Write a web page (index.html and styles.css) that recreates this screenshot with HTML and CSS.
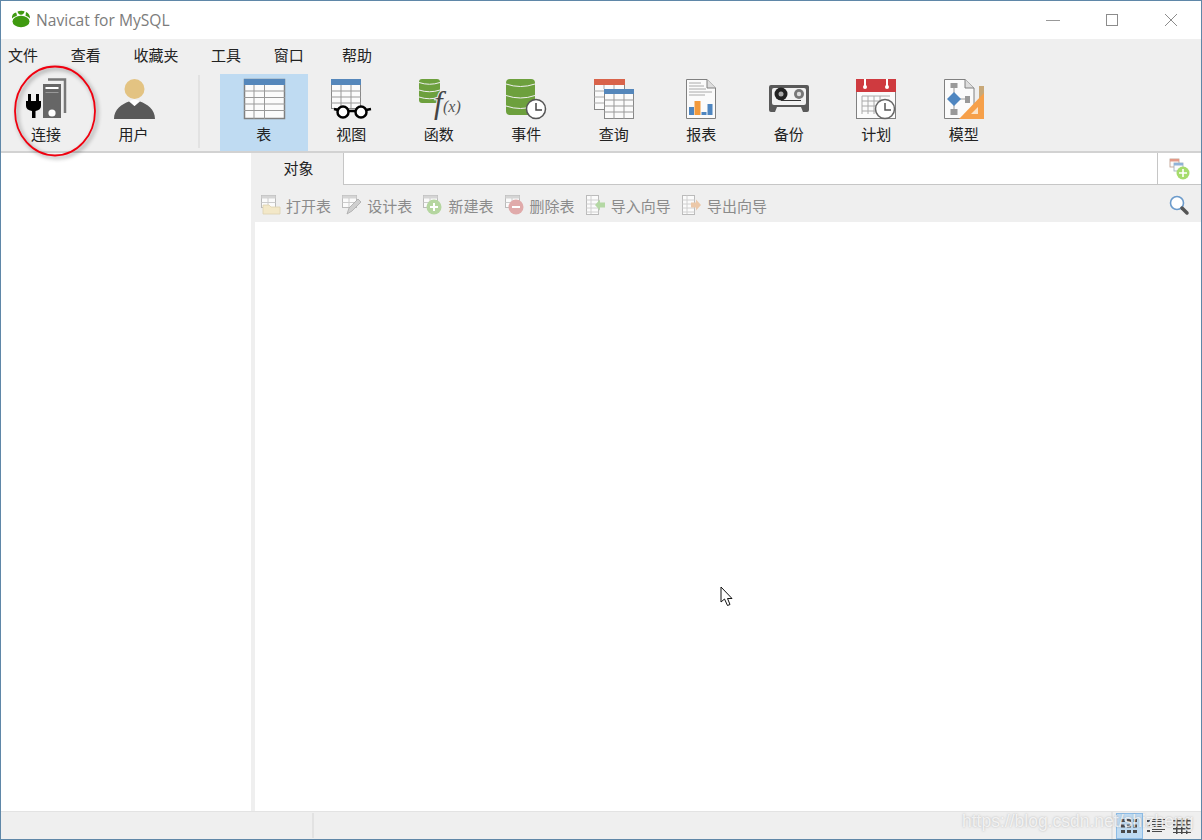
FILE: index.html
```html
<!DOCTYPE html>
<html lang="zh-CN">
<head>
    <meta charset="UTF-8">
    <title>Navicat for MySQL</title>
    <link rel="stylesheet" href="styles.css">
</head>
<body>
    <div class="window">
        <div class="titlebar">
            <svg class="logo" width="20" height="18" viewBox="0 0 20 18">
                <ellipse cx="10" cy="11.500" rx="8.500" ry="5.800" fill="#3f9a10"/>
                <path d="M1 8.500Q.5 3.500 5 2.500Q6.500 5.500 5.500 6Q2.500 6.500 1 8.500Z" fill="#3f9a10"/>
                <path d="M6.500 1.500Q10 0 13.500 1.200Q13 4.500 10 4.800Q7 4.500 6.500 1.500Z" fill="#3f9a10"/>
                <path d="M15 2Q19 3.500 19 8.500Q17 6.500 14.500 5.800Z" fill="#3f9a10"/>
            </svg>
            <span class="app-title">Navicat for MySQL</span>
            <div class="win-controls">
                <svg width="60" height="30" viewBox="0 0 60 30"><path d="M23 15.500H37" stroke="#999"/></svg>
                <svg width="58" height="30" viewBox="0 0 58 30"><rect x="23.500" y="9.500" width="11" height="11" fill="none" stroke="#8c8c8c"/></svg>
                <svg width="60" height="30" viewBox="0 0 60 30"><path d="M24 9L36 21M36 9L24 21" stroke="#8c8c8c"/></svg>
            </div>
        </div>

        <div class="menubar">
            <span class="menu-item">文件</span>
            <span class="menu-item">查看</span>
            <span class="menu-item">收藏夹</span>
            <span class="menu-item">工具</span>
            <span class="menu-item">窗口</span>
            <span class="menu-item menu-help">帮助</span>
        </div>

        <div class="toolbar">
            <div class="tool-btn">
                <svg width="48" height="44" viewBox="0 0 48 44">
                    <path d="M26 3.500H43V37" fill="none" stroke="#777" stroke-width="2.500"/>
                    <rect x="21" y="8" width="18" height="34" fill="#666"/>
                    <rect x="23.500" y="11" width="13" height="2" fill="#fff"/>
                    <rect x="23.500" y="16" width="13" height="1" fill="#999"/>
                    <circle cx="30" cy="37" r="3.600" fill="#fff"/>
                    <path d="M6 18h3v8H6zM14 18h3v8h-3z" fill="#000"/>
                    <path d="M4 25H19V30Q19 34 13.500 35V42H10V35Q4 34 4 30Z" fill="#000"/>
                </svg>
                <span>连接</span>
            </div>
            <div class="tool-btn">
                <svg width="48" height="44" viewBox="0 0 48 44">
                    <circle cx="24.500" cy="13" r="10" fill="#e3c382"/>
                    <path d="M4 43C4 33 12 28 19 25.500L24.500 30L30 25.500C37 28 45 33 45 43Z" fill="#595959"/>
                    <path d="M19.500 25L24.500 30L29.500 25Q24.500 22 19.500 25Z" fill="#fff"/>
                </svg>
                <span>用户</span>
            </div>
            <div class="tool-sep"></div>
            <div class="tool-btn active">
                <svg width="48" height="44" viewBox="0 0 48 44">
                    <use href="#grid-lg"/>
                </svg>
                <span>表</span>
            </div>
            <div class="tool-btn">
                <svg width="48" height="44" viewBox="0 0 48 44">
                    <rect x="4.500" y="3.500" width="29" height="29" fill="#fbfbfb" stroke="#888"/>
                    <rect x="4" y="3" width="30" height="6" fill="#5587bb"/>
                    <path d="M4 15H34M4 21H34M4 27H34M14 9V32M24 9V32" stroke="#999"/>
                    <circle cx="16" cy="36" r="5.500" fill="#fff" stroke="#000" stroke-width="2.500"/>
                    <circle cx="34" cy="36" r="5.500" fill="#fff" stroke="#000" stroke-width="2.500"/>
                    <path d="M21 35H29M7 33L11 34M39 34L44 33" stroke="#000" stroke-width="2.500"/>
                </svg>
                <span>视图</span>
            </div>
            <div class="tool-btn">
                <svg width="48" height="44" viewBox="0 0 48 44">
                    <rect x="4" y="3" width="21" height="24" rx="3" fill="#6da03d"/>
                    <path d="M4 6.500Q14.500 10 25 6.500M4 14Q14.500 17.500 25 14M4 21Q14.500 24.500 25 21" stroke="#efefef" fill="none"/>
                    <text class="fx-f" x="19" y="37">f</text>
                    <text class="fx-x" x="28" y="36">(x)</text>
                </svg>
                <span>函数</span>
            </div>
            <div class="tool-btn">
                <svg width="48" height="44" viewBox="0 0 48 44">
                    <rect x="4" y="3" width="29" height="36" rx="4" fill="#6da03d"/>
                    <path d="M4 8Q18.500 13 33 8M4 19.500Q18.500 24.500 33 19.500M4 30Q18.500 35 33 30" stroke="#efefef" fill="none"/>
                    <circle cx="34" cy="33" r="9.500" fill="#fff" stroke="#555" stroke-width="1.500"/>
                    <path d="M34 27V34H40" fill="none" stroke="#444" stroke-width="1.500"/>
                </svg>
                <span>事件</span>
            </div>
            <div class="tool-btn">
                <svg width="48" height="44" viewBox="0 0 48 44">
                    <rect x="4.500" y="3.500" width="30" height="30" fill="#fbfbfb" stroke="#888"/>
                    <rect x="4" y="3" width="31" height="6" fill="#d9634a"/>
                    <path d="M4 15H14M4 21H14M4 27H14M14 9V13M24 9V13" stroke="#aaa"/>
                    <rect x="14.500" y="13.500" width="29" height="29" fill="#fbfbfb" stroke="#888"/>
                    <rect x="14" y="13" width="30" height="5" fill="#5587bb"/>
                    <path d="M14 24H44M14 30H44M14 36H44M24 18V43M34 18V43" stroke="#999"/>
                </svg>
                <span>查询</span>
            </div>
            <div class="tool-btn">
                <svg width="48" height="44" viewBox="0 0 48 44">
                    <path d="M9.500 3.500H30L38.500 12V42.500H9.500Z" fill="#fbfbfb" stroke="#808080"/>
                    <path d="M30 3.500V12H38.500" fill="#ddd" stroke="#808080"/>
                    <path d="M12 7H24M12 10H27M12 13H29M12 16H35M12 19H28" stroke="#aaa"/>
                    <rect x="12" y="31" width="5" height="8" fill="#4f86c0"/>
                    <rect x="17.500" y="25" width="6" height="14" fill="#f39a3c"/>
                    <rect x="24.500" y="36" width="5" height="3" fill="#4f86c0"/>
                    <rect x="30.500" y="28" width="5" height="11" fill="#4f86c0"/>
                </svg>
                <span>报表</span>
            </div>
            <div class="tool-btn">
                <svg width="48" height="44" viewBox="0 0 48 44">
                    <path d="M6 9H42Q44 9 44 11V34Q44 36 42 36H38L36 31H12L10 36H6Q4 36 4 34V11Q4 9 6 9Z" fill="#595959"/>
                    <rect x="7" y="12" width="34" height="17" rx="2" fill="#f2f2f2"/>
                    <circle cx="16" cy="18" r="6.500" fill="#222"/>
                    <circle cx="16" cy="18" r="2.500" fill="#aaa"/>
                    <circle cx="34" cy="18" r="5" fill="#777"/>
                    <circle cx="34" cy="18" r="2.200" fill="#ddd"/>
                    <path d="M16 24.500H36" stroke="#333"/>
                    <path d="M15 33.500h2M21 33.500h2M26 33.500h2M31 33.500h2" stroke="#eee"/>
                </svg>
                <span>备份</span>
            </div>
            <div class="tool-btn">
                <svg width="48" height="44" viewBox="0 0 48 44">
                    <rect x="4.500" y="3.500" width="39" height="39" fill="#fbfbfb" stroke="#808080"/>
                    <rect x="4" y="3" width="40" height="13" fill="#cf3a3f"/>
                    <rect x="12" y="3" width="2" height="7" fill="#fff"/>
                    <circle cx="13" cy="11" r="2" fill="#fff"/>
                    <rect x="34" y="3" width="2" height="7" fill="#fff"/>
                    <circle cx="35" cy="11" r="2" fill="#fff"/>
                    <path d="M10 20H38M10 25H38M10 30H38M10 35H38M10 20V38M16 20V38M22 20V38M28 20V38" stroke="#aaa"/>
                    <circle cx="33" cy="33" r="9.500" fill="#fff" stroke="#666" stroke-width="1.500"/>
                    <path d="M33 27V34H39" fill="none" stroke="#555" stroke-width="1.500"/>
                </svg>
                <span>计划</span>
            </div>
            <div class="tool-btn">
                <svg width="48" height="44" viewBox="0 0 48 44">
                    <path d="M4.500 3.500H25L34 12V42.500H4.500Z" fill="#fbfbfb" stroke="#808080"/>
                    <path d="M25 3.500V12H34" fill="#ddd" stroke="#808080"/>
                    <rect x="39" y="10" width="5" height="14" fill="#c8a878"/>
                    <path d="M14 10V36M14 23H27" stroke="#999"/>
                    <rect x="10.500" y="7" width="7" height="5" fill="#999"/>
                    <rect x="10.500" y="33" width="7" height="6" fill="#999"/>
                    <rect x="25" y="20" width="5" height="7" fill="#999"/>
                    <path d="M14 16L21 23L14 30L7 23Z" fill="#4f86c0"/>
                    <path d="M44 17V43H19Z" fill="#f6a04a"/>
                    <path d="M38 31V38H31Z" fill="#fbe3c8"/>
                </svg>
                <span>模型</span>
            </div>
        </div>

        <div class="workspace">
            <div class="sidebar"></div>
            <div class="main">
                <div class="tabbar">
                    <div class="tab">对象</div>
                    <div class="tab-fill"></div>
                    <div class="tab-add">
                        <svg width="22" height="22" viewBox="0 0 22 22">
                            <rect x="1" y="1" width="9" height="8" fill="#fbfbfb" stroke="#b98" stroke-width=".8"/>
                            <rect x="1" y="1" width="9" height="2.500" fill="#e39a88"/>
                            <rect x="5" y="5" width="9" height="8" fill="#fbfbfb" stroke="#9ab" stroke-width=".8"/>
                            <rect x="5" y="5" width="9" height="2.500" fill="#8fb2d8"/>
                            <circle cx="14" cy="15" r="6.500" fill="#a6dc6c"/>
                            <path d="M14 11V19M10 15H18" stroke="#fff" stroke-width="1.600"/>
                        </svg>
                    </div>
                </div>
                <div class="objbar">
                    <div class="obj-item">
                        <svg width="22" height="22" viewBox="0 0 22 22">
                            <use href="#grid-sm"/>
                            <path d="M3 20V11H9L11 13H20V20Z" fill="#f3e8c8" stroke="#ddd2b0" stroke-width=".8"/>
                        </svg>
                        <span>打开表</span>
                    </div>
                    <div class="obj-item">
                        <svg width="22" height="22" viewBox="0 0 22 22">
                            <use href="#grid-sm"/>
                            <path d="M6 20L8 14L17 5L20 8L11 17Z" fill="#cfcfcf" stroke="#aaa" stroke-width=".8"/>
                        </svg>
                        <span>设计表</span>
                    </div>
                    <div class="obj-item">
                        <svg width="22" height="22" viewBox="0 0 22 22">
                            <use href="#grid-sm"/>
                            <circle cx="12" cy="13" r="7.500" fill="#b5d6a0"/>
                            <path d="M12 9V17M8 13H16" stroke="#fff" stroke-width="2"/>
                        </svg>
                        <span>新建表</span>
                    </div>
                    <div class="obj-item">
                        <svg width="22" height="22" viewBox="0 0 22 22">
                            <use href="#grid-sm"/>
                            <circle cx="12" cy="13" r="7.500" fill="#e0aaaa"/>
                            <path d="M8 13H16" stroke="#fff" stroke-width="2"/>
                        </svg>
                        <span>删除表</span>
                    </div>
                    <div class="obj-item">
                        <svg width="22" height="22" viewBox="0 0 22 22">
                            <use href="#grid-tall"/>
                            <path d="M10 11L15 5.500V8.500H20V13.500H15V16.500Z" fill="#b4d8a4"/>
                        </svg>
                        <span>导入向导</span>
                    </div>
                    <div class="obj-item">
                        <svg width="22" height="22" viewBox="0 0 22 22">
                            <use href="#grid-tall"/>
                            <path d="M20 11L15 5.500V8.500H10V13.500H15V16.500Z" fill="#ecc8a8"/>
                        </svg>
                        <span>导出向导</span>
                    </div>
                    <svg class="search" width="22" height="22" viewBox="0 0 22 22">
                        <circle cx="9" cy="9" r="6.500" fill="#fff" stroke="#6c9bcb" stroke-width="1.600"/>
                        <path d="M14 14L19 19" stroke="#555" stroke-width="3.500" stroke-linecap="round"/>
                    </svg>
                </div>
                <div class="content"></div>
            </div>
        </div>

        <div class="statusbar">
            <div class="status-cell"></div>
            <div class="view-btns">
                <div class="view-btn active">
                    <svg width="18" height="16" viewBox="0 0 18 16"><use href="#view-icons"/></svg>
                </div>
                <div class="view-btn">
                    <svg width="18" height="16" viewBox="0 0 18 16"><use href="#view-list"/></svg>
                </div>
                <div class="view-btn">
                    <svg width="18" height="16" viewBox="0 0 18 16"><use href="#view-grid"/></svg>
                </div>
            </div>
        </div>

        <!-- annotation drawn over the screenshot -->
        <svg class="annotation" width="92" height="100" viewBox="0 0 92 100">
            <ellipse cx="44" cy="48" rx="40" ry="44.500" fill="none" stroke="#f0000f" stroke-width="1.800"/>
        </svg>
        <svg class="cursor" width="16" height="22" viewBox="0 0 16 22">
            <path d="M1 1V16L4.500 13L7.500 19.500L10 18.500L7.500 12.500H12Z" fill="#fff" stroke="#111"/>
        </svg>
        <span class="watermark">https://blog.csdn.net/shizheng</span>
    </div>

    <svg class="defs" width="0" height="0">
        <defs>
            <g id="grid-lg">
                <rect x="4.500" y="3.500" width="40" height="39" fill="#fbfbfb" stroke="#808080" stroke-width="1.500"/>
                <rect x="4" y="3" width="41" height="6" fill="#5587bb"/>
                <path d="M4 15H45M4 21.500H45M4 28H45M4 34.500H45M14 9V43M24.500 9V43" stroke="#999"/>
            </g>
            <g id="grid-sm">
                <rect x="1.500" y="1.500" width="14" height="12" fill="#fbfbfb" stroke="#bbb"/>
                <rect x="1.500" y="1.500" width="14" height="3" fill="#d5d5d5"/>
                <path d="M1.500 8.500H15.500M8 4V13" stroke="#ccc"/>
            </g>
            <g id="grid-tall">
                <rect x="1.500" y="1.500" width="12" height="19" fill="#fbfbfb" stroke="#bbb"/>
                <path d="M1.500 6H13.500M1.500 10H13.500M1.500 14H13.500M1.500 18H13.500M6 1.500V20" stroke="#d0d0d0"/>
            </g>
            <g id="view-icons" fill="#4a4a4a">
                <path d="M1 1h4v3H1zM7 1h4v3H7zM13 1h4v3h-4zM1 6.500h4v3H1zM7 6.500h4v3H7zM13 6.500h4v3h-4zM1 12h4v3H1zM7 12h4v3H7zM13 12h4v3h-4z"/>
            </g>
            <g id="view-list" fill="#4a4a4a">
                <path d="M0 2h3v2H0zM0 7h3v2H0zM0 12h3v2H0zM5 1h13v1H5zM5 3h10v1H5zM5 6h13v1H5zM5 8h10v1H5zM5 11h13v1H5zM5 13h10v1H5z"/>
            </g>
            <g id="view-grid" fill="#4a4a4a">
                <path d="M0 2h18v1.500H0zM0 6h18v1.500H0zM0 10h18v1.500H0zM0 14h18v1H0zM3 0h1.500v16H3zM8 0h1.500v16H8zM13 0h1.500v16H13z"/>
            </g>
        </defs>
    </svg>
</body>
</html>
```

FILE: styles.css
```css
html, body {
    margin: 0;
    padding: 0;
    height: 100%;
    overflow: hidden;
    background-color: #fff;
    font-family: "Noto Sans CJK SC", "Noto Sans", sans-serif;
    font-size: 15px;
    color: #222;
}

.window {
    position: relative;
    box-sizing: border-box;
    width: 1202px;
    height: 840px;
    border: 1px solid #5f87a8;
    display: flex;
    flex-direction: column;
    overflow: hidden;
}

.defs {
    position: absolute;
}

/* title bar */
.titlebar {
    height: 38px;
    flex: none;
    display: flex;
    align-items: center;
    background-color: #fff;
}

.logo {
    margin-left: 10px;
    margin-top: -2px;
}

.app-title {
    margin-left: 5px;
    margin-top: -1px;
    font-family: "Open Sans", sans-serif;
    font-size: 15.600px;
    color: #7c7c7c;
}

.win-controls {
    margin-left: auto;
    display: flex;
}

/* menu */
.menubar {
    height: 35px;
    flex: none;
    box-sizing: border-box;
    display: flex;
    align-items: center;
    gap: 32.700px;
    padding: 0 0 5px 7px;
    background-color: #efefef;
}

.menu-help {
    margin-left: 5.500px;
}

/* main toolbar */
.toolbar {
    height: 77px;
    flex: none;
    display: flex;
    padding-left: 1.250px;
    background-color: #efefef;
    border-bottom: 2px solid #d2d2d2;
}

.tool-btn {
    width: 87.500px;
    flex: none;
    display: flex;
    flex-direction: column;
    align-items: center;
    padding-top: 2px;
    box-sizing: border-box;
}

.tool-btn span {
    margin-top: 3px;
    line-height: 22px;
}

.tool-btn.active {
    background-color: #bfdbf2;
}

.tool-sep {
    width: 2px;
    margin: 1px 20px 3px 20.750px;
    background-color: #e2e2e2;
}

.fx-f {
    font-family: "Liberation Serif", serif;
    font-style: italic;
    font-size: 31px;
    fill: #444;
    stroke: #efefef;
    stroke-width: 2px;
    paint-order: stroke;
}

.fx-x {
    font-family: "Liberation Serif", serif;
    font-style: italic;
    font-size: 16px;
    fill: #555;
}

/* workspace */
.workspace {
    flex: 1;
    display: flex;
    min-height: 0;
}

.sidebar {
    width: 250px;
    flex: none;
    background-color: #fff;
    border-right: 4px solid #efefef;
}

.main {
    flex: 1;
    display: flex;
    flex-direction: column;
}

.tabbar {
    height: 32px;
    flex: none;
    display: flex;
}

.tab {
    width: 88px;
    display: flex;
    align-items: center;
    justify-content: center;
    background-color: #efefef;
    padding: 0 1px 3px 0;
    box-sizing: border-box;
}

.tab-fill {
    flex: 1;
    background-color: #fff;
    border-left: 1px solid #c6c6c6;
    border-bottom: 1px solid #c6c6c6;
}

.tab-add {
    width: 44px;
    display: flex;
    align-items: center;
    justify-content: center;
    border-left: 1px solid #c6c6c6;
    border-bottom: 1px solid #c6c6c6;
    box-sizing: border-box;
    padding-left: 1px;
}

.objbar {
    height: 37px;
    flex: none;
    box-sizing: border-box;
    display: flex;
    align-items: center;
    gap: 10.200px;
    padding: 2px 0 0 5px;
    background-color: #efefef;
}

.obj-item {
    display: flex;
    align-items: center;
    gap: 4px;
    color: #8b8b8b;
}

.obj-item span {
    margin-top: 2px;
}

.search {
    margin-left: auto;
    margin-right: 11px;
}

.content {
    flex: 1;
    background-color: #fff;
}

/* status bar */
.statusbar {
    height: 27px;
    flex: none;
    display: flex;
    background-color: #efefef;
    border-top: 1px solid #e3e3e3;
}

.status-cell {
    width: 311px;
    margin: 1px 0;
    border-right: 2px solid #e2e2e2;
}

.view-btns {
    margin-left: auto;
    margin-right: 5.500px;
    display: flex;
    align-items: center;
    padding-left: 3px;
    border-left: 2px solid #e2e2e2;
}

.view-btn {
    box-sizing: border-box;
    width: 26.500px;
    height: 26px;
    display: flex;
    align-items: center;
    justify-content: center;
}

.view-btn.active {
    background-color: #bfdbf2;
    border: 1px solid #8dbce6;
}

/* overlays */
.annotation {
    position: absolute;
    left: 10px;
    top: 62px;
    filter: drop-shadow(2px 2px 2px rgba(0, 0, 0, 0.45));
}

.cursor {
    position: absolute;
    left: 719px;
    top: 585px;
}

.watermark {
    position: absolute;
    left: 961px;
    top: 810px;
    font-family: "Liberation Sans", sans-serif;
    font-size: 17.500px;
    color: rgba(255, 255, 255, 0.75);
    text-shadow: 0 0 2px rgba(120, 120, 120, 0.5);
    white-space: nowrap;
}
```
